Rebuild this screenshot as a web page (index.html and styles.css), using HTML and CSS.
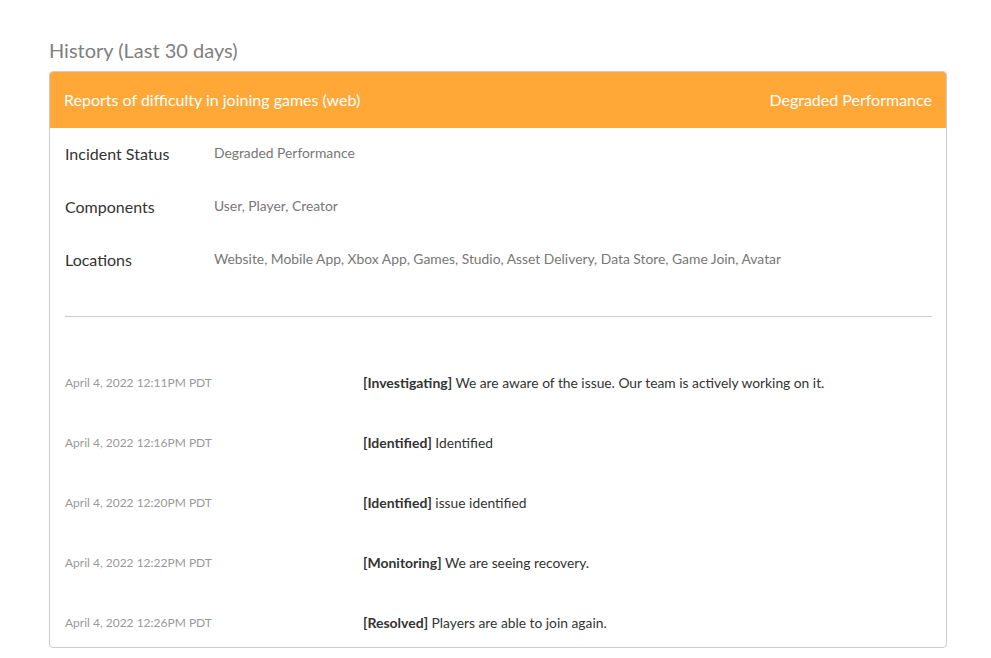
FILE: index.html
```html
<!DOCTYPE html>
<html>
<head>
<meta charset="utf-8">
<link rel="stylesheet" href="styles.css">
</head>
<body>
<main class="page">
  <h2 class="section-title">History (Last 30 days)</h2>
  <section class="incident">
    <header class="incident-head">
      <span class="incident-name">Reports of difficulty in joining games (web)</span>
      <span class="incident-state">Degraded Performance</span>
    </header>
    <div class="incident-body">
      <div class="details">
        <div class="detail-row"><div class="detail-label">Incident Status</div><div class="detail-value">Degraded Performance</div></div>
        <div class="detail-row"><div class="detail-label">Components</div><div class="detail-value">User, Player, Creator</div></div>
        <div class="detail-row"><div class="detail-label">Locations</div><div class="detail-value">Website, Mobile App, Xbox App, Games, Studio, Asset Delivery, Data Store, Game Join, Avatar</div></div>
      </div>
      <hr class="divider">
      <div class="updates">
        <div class="update"><div class="update-time">April 4, 2022 12:11PM PDT</div><div class="update-text"><strong>[Investigating]</strong> We are aware of the issue. Our team is actively working on it.</div></div>
        <div class="update"><div class="update-time">April 4, 2022 12:16PM PDT</div><div class="update-text"><strong>[Identified]</strong> Identified</div></div>
        <div class="update"><div class="update-time">April 4, 2022 12:20PM PDT</div><div class="update-text"><strong>[Identified]</strong> issue identified</div></div>
        <div class="update"><div class="update-time">April 4, 2022 12:22PM PDT</div><div class="update-text"><strong>[Monitoring]</strong> We are seeing recovery.</div></div>
        <div class="update"><div class="update-time">April 4, 2022 12:26PM PDT</div><div class="update-text"><strong>[Resolved]</strong> Players are able to join again.</div></div>
      </div>
    </div>
  </section>
</main>
</body>
</html>
```
FILE: styles.css
```css
html, body {
  margin: 0;
  padding: 0;
  background: #ffffff;
}
body {
  font-family: Lato, "Open Sans", "Liberation Sans", sans-serif;
  color: #333333;
}
.page {
  padding: 38px 44px 0 49px;
}
.section-title {
  margin: 0 0 9px 0;
  font-size: 20px;
  line-height: 24px;
  font-weight: 400;
  color: #808080;
}
.incident {
  border: 1px solid #cccccc;
  border-radius: 4px;
  overflow: hidden;
}
.incident-head {
  display: flex;
  justify-content: space-between;
  align-items: center;
  height: 57px;
  padding: 0 15px 0 15px;
  background: #ffa837;
  color: #ffffff;
  font-size: 16px;
  margin: -1px -1px 0 -1px;
}
.incident-body {
  padding: 16px 14px 15px 15px;
}
.details {
  display: flex;
  flex-direction: column;
  gap: 33px;
}
.detail-row {
  display: flex;
  align-items: flex-start;
}
.detail-label {
  width: 149px;
  flex: none;
  font-size: 16px;
  line-height: 20px;
  color: #333333;
}
.detail-value {
  font-size: 13.85px;
  line-height: 18px;
  color: #777777;
}
.divider {
  margin: 46px 0 0 0;
  border: 0;
  border-top: 1px solid #cccccc;
  height: 0;
}
.updates {
  padding-top: 55px;
  display: flex;
  flex-direction: column;
  gap: 40px;
}
.update {
  display: flex;
  align-items: center;
  height: 20px;
}
.update-time {
  width: 298px;
  flex: none;
  font-size: 12px;
  color: #999999;
}
.update-text {
  font-size: 13.8px;
  color: #333333;
}
.update-text strong {
  font-size: 14px;
  font-weight: 700;
}
```
